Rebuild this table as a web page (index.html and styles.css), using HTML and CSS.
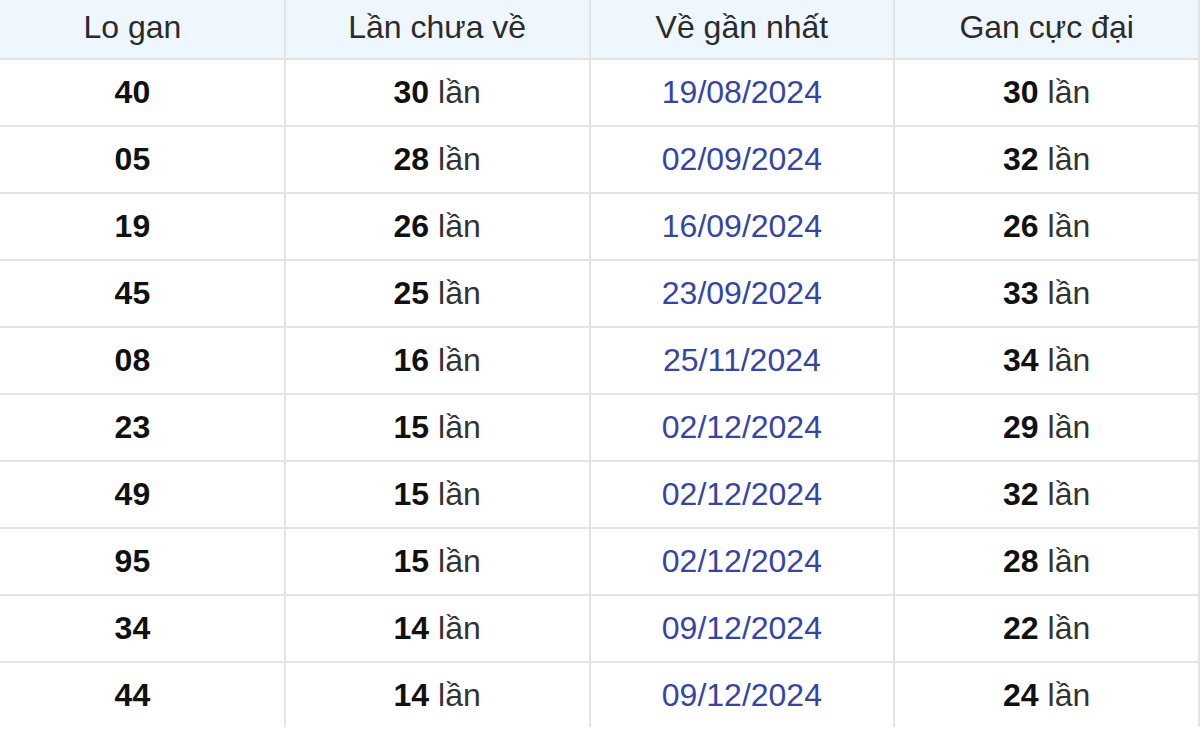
FILE: index.html
```html
<!DOCTYPE html>
<html lang="vi">
<head>
<meta charset="utf-8">
<link rel="stylesheet" href="styles.css">
</head>
<body>
<div class="wrap">
<table class="gan">
  <thead>
    <tr><th>Lo gan</th><th>Lần chưa về</th><th>Về gần nhất</th><th>Gan cực đại</th></tr>
  </thead>
  <tbody>
    <tr><td class="num">40</td><td><b>30</b> lần</td><td class="date">19/08/2024</td><td><b>30</b> lần</td></tr>
    <tr><td class="num">05</td><td><b>28</b> lần</td><td class="date">02/09/2024</td><td><b>32</b> lần</td></tr>
    <tr><td class="num">19</td><td><b>26</b> lần</td><td class="date">16/09/2024</td><td><b>26</b> lần</td></tr>
    <tr><td class="num">45</td><td><b>25</b> lần</td><td class="date">23/09/2024</td><td><b>33</b> lần</td></tr>
    <tr><td class="num">08</td><td><b>16</b> lần</td><td class="date">25/11/2024</td><td><b>34</b> lần</td></tr>
    <tr><td class="num">23</td><td><b>15</b> lần</td><td class="date">02/12/2024</td><td><b>29</b> lần</td></tr>
    <tr><td class="num">49</td><td><b>15</b> lần</td><td class="date">02/12/2024</td><td><b>32</b> lần</td></tr>
    <tr><td class="num">95</td><td><b>15</b> lần</td><td class="date">02/12/2024</td><td><b>28</b> lần</td></tr>
    <tr><td class="num">34</td><td><b>14</b> lần</td><td class="date">09/12/2024</td><td><b>22</b> lần</td></tr>
    <tr class="last"><td class="num">44</td><td><b>14</b> lần</td><td class="date">09/12/2024</td><td><b>24</b> lần</td></tr>
  </tbody>
</table>
</div>
</body>
</html>
```
FILE: styles.css
```css
html, body {
  margin: 0;
  padding: 0;
  background: #ffffff;
  overflow: hidden;
}
.wrap {
  width: 1200px;
  height: 736px;
  overflow: hidden;
}
.gan {
  border-collapse: collapse;
  table-layout: fixed;
  width: 1221px;
  margin-left: -21px;
  font-family: "Liberation Sans", Arial, sans-serif;
  font-size: 32px;
  color: #333333;
}
.gan th, .gan td {
  border: 2px solid #e3e3e3;
  text-align: center;
  vertical-align: middle;
  padding: 0;
}
.gan thead th {
  border-top: none;
  background: #eef6fe;
  font-weight: normal;
  color: #2b2b2b;
  height: 55px;
  padding-bottom: 3px;
}
.gan td {
  height: 65px;
}
.gan tr.last td {
  border-bottom: none;
  height: 64px;
}
.gan td b, .gan td.num {
  font-weight: bold;
  color: #111111;
}
.gan td.date {
  color: #3545a6;
}
```
